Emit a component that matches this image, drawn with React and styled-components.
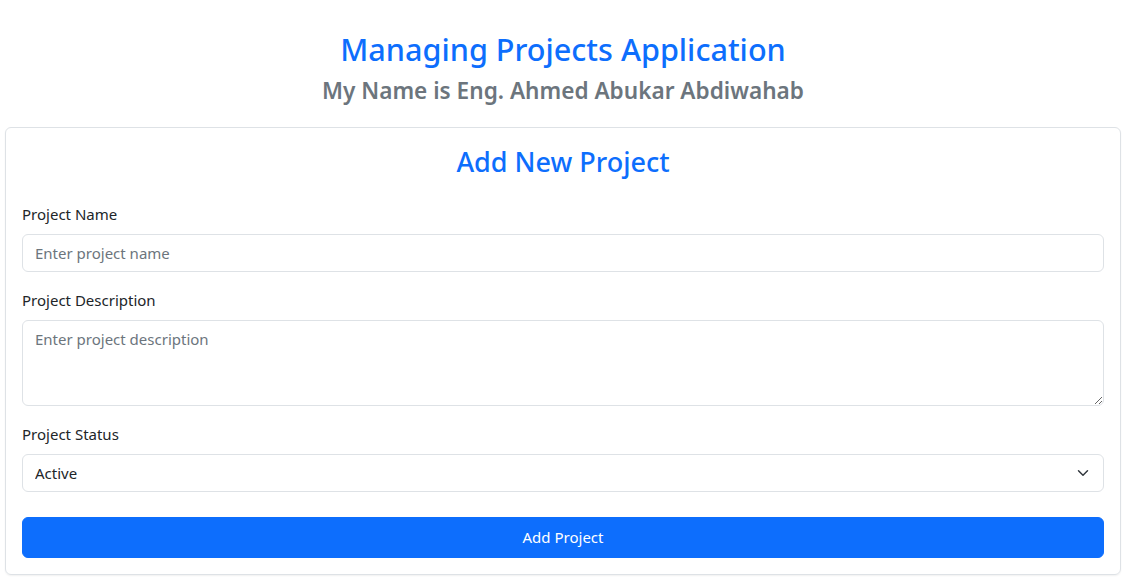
import React, { useState } from 'react';
import styled, { createGlobalStyle } from 'styled-components';

const GlobalStyle = createGlobalStyle`
  * { box-sizing: border-box; }
  body {
    margin: 0;
    background: #fff;
    color: #212529;
    font-family: "Noto Sans", "Open Sans", sans-serif;
    font-size: 15px;
    line-height: 1.5;
  }
`;

const Page = styled.div`
  padding: 30px 13px 8px 5px;
`;

const Header = styled.header`
  text-align: center;
  margin-bottom: 22px;
`;

const Title = styled.h2`
  margin: 0;
  font-size: 30.6px;
  font-weight: 500;
  line-height: 38px;
  color: #0d6efd;
`;

const Subtitle = styled.h4`
  margin: 8px 0 0;
  font-size: 22.6px;
  font-weight: 600;
  line-height: 29px;
  color: #6c757d;
`;

const Card = styled.div`
  border: 1px solid #dee2e6;
  border-radius: 6px;
  padding: 16px;
  box-shadow: 0 1px 2px rgba(0, 0, 0, 0.06);
`;

const CardTitle = styled.h3`
  margin: 1px 0 23px;
  text-align: center;
  font-size: 27px;
  font-weight: 500;
  line-height: 34px;
  color: #0d6efd;
`;

const Field = styled.div`
  margin-bottom: ${(p) => p.$mb || 16}px;
`;

const Label = styled.label`
  display: block;
  margin-bottom: 8px;
  font-size: 15px;
  line-height: 24px;
  color: #212529;
`;

const controlBase = `
  display: block;
  width: 100%;
  padding: 6px 12px;
  font: inherit;
  font-size: 15px;
  line-height: 24px;
  color: #212529;
  background-color: #fff;
  border: 1px solid #dee2e6;
  border-radius: 6px;
  outline: none;
  &::placeholder { color: #6c757d; opacity: 1; }
`;

const Input = styled.input`
  ${controlBase}
  height: 38px;
`;

const TextArea = styled.textarea`
  ${controlBase}
  height: 86px;
  resize: vertical;
`;

const Select = styled.select`
  ${controlBase}
  height: 38px;
  appearance: none;
  padding-right: 36px;
  background-image: url("data:image/svg+xml,%3csvg xmlns='http://www.w3.org/2000/svg' viewBox='0 0 16 16'%3e%3cpath fill='none' stroke='%23343a40' stroke-linecap='round' stroke-linejoin='round' stroke-width='2' d='m2 5 6 6 6-6'/%3e%3c/svg%3e");
  background-repeat: no-repeat;
  background-position: right 12px center;
  background-size: 16px 12px;
`;

const SubmitButton = styled.button`
  display: block;
  width: 100%;
  height: 41px;
  border: 1px solid #0d6efd;
  border-radius: 6px;
  background: #0d6efd;
  color: #fff;
  font: inherit;
  font-size: 15px;
  cursor: pointer;
`;

export default function App() {
  const [status, setStatus] = useState('Active');
  return (
    <>
      <GlobalStyle />
      <Page>
        <Header>
          <Title>Managing Projects Application</Title>
          <Subtitle>My Name is Eng. Ahmed Abukar Abdiwahab</Subtitle>
        </Header>
        <Card>
          <CardTitle>Add New Project</CardTitle>
          <form onSubmit={(e) => e.preventDefault()}>
            <Field>
              <Label htmlFor="name">Project Name</Label>
              <Input id="name" placeholder="Enter project name" />
            </Field>
            <Field>
              <Label htmlFor="desc">Project Description</Label>
              <TextArea id="desc" rows={3} placeholder="Enter project description" />
            </Field>
            <Field $mb={25}>
              <Label htmlFor="status">Project Status</Label>
              <Select id="status" value={status} onChange={(e) => setStatus(e.target.value)}>
                <option>Active</option>
                <option>Completed</option>
                <option>On Hold</option>
              </Select>
            </Field>
            <SubmitButton type="submit">Add Project</SubmitButton>
          </form>
        </Card>
      </Page>
    </>
  );
}
